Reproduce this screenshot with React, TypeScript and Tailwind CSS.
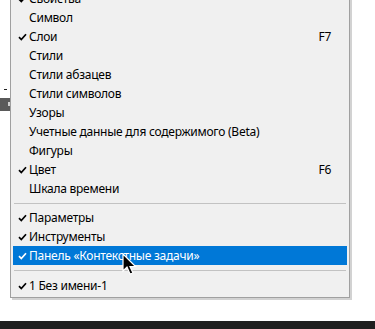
import React from 'react';

type Item =
  | { kind: 'item'; label: string; checked?: boolean; shortcut?: string; active?: boolean }
  | { kind: 'sep'; h: string };

const items: Item[] = [
  { kind: 'item', label: 'Свойства', checked: true },
  { kind: 'item', label: 'Символ' },
  { kind: 'item', label: 'Слои', checked: true, shortcut: 'F7' },
  { kind: 'item', label: 'Стили' },
  { kind: 'item', label: 'Стили абзацев' },
  { kind: 'item', label: 'Стили символов' },
  { kind: 'item', label: 'Узоры' },
  { kind: 'item', label: 'Учетные данные для содержимого (Beta)' },
  { kind: 'item', label: 'Фигуры' },
  { kind: 'item', label: 'Цвет', checked: true, shortcut: 'F6' },
  { kind: 'item', label: 'Шкала времени' },
  { kind: 'sep', h: 'h-[10px]' },
  { kind: 'item', label: 'Параметры', checked: true },
  { kind: 'item', label: 'Инструменты', checked: true },
  { kind: 'item', label: 'Панель «Контекстные задачи»', checked: true, active: true },
  { kind: 'sep', h: 'h-[11px]' },
  { kind: 'item', label: '1 Без имени-1', checked: true },
];

function Check({ white }: { white?: boolean }) {
  return (
    <svg width="9" height="8" viewBox="0 0 9 8" className="shrink-0">
      <path
        d="M1 4.2 L3.3 6.6 L8 1.2"
        fill="none"
        stroke={white ? '#ffffff' : '#000000'}
        strokeWidth="1.7"
      />
    </svg>
  );
}

function Cursor() {
  return (
    <svg
      width="16"
      height="23"
      viewBox="0 0 16 23"
      className="absolute left-[122px] top-[253px]"
    >
      <path
        d="M1 1 L1 18 L5 14 L8 21 L11 20 L8 13.5 L13.5 13.5 Z"
        fill="#000000"
        stroke="#ffffff"
        strokeWidth="1.2"
        strokeLinejoin="miter"
      />
    </svg>
  );
}

export default function App() {
  return (
    <div
      className="relative h-[329px] w-[375px] overflow-hidden bg-white"
      style={{ fontFamily: '"Noto Sans", "Open Sans", sans-serif' }}
    >
      <div className="flex h-[321px]">
        {/* left strip peeking out behind the menu */}
        <div className="flex w-[10px] shrink-0 flex-col">
          <div className="h-[89px]" />
          <div className="ml-[4px] h-px w-[3px] bg-[#222]" />
          <div className="h-[8px]" />
          <div className="relative h-[13px] bg-[#5a5a5a]">
            <div className="absolute right-0 top-[4px] h-[4px] w-[2px] bg-[#d0d0d0]" />
          </div>
        </div>

        {/* menu */}
        <div className="relative mt-[-14px] h-[312px] w-[340px] shrink-0">
          <div className="absolute left-[2px] top-[2px] h-full w-full bg-[#b4b4b4] opacity-60" />
          <div className="relative flex h-full flex-col border border-[#a0a0a0] bg-[#f0f0f0] p-[2px] pb-0">
            {items.map((it, i) =>
              it.kind === 'sep' ? (
                <div key={i} className={'flex shrink-0 items-center px-[1px] ' + it.h}>
                  <div className="h-px w-full bg-[#c2c2c2]" />
                </div>
              ) : (
                <div
                  key={i}
                  className={
                    'flex h-[19px] shrink-0 items-center text-[12px] leading-none tracking-[-0.25px] ' +
                    (it.active ? 'bg-[#0078d7] text-white' : 'text-black')
                  }
                >
                  <div className="flex w-[16px] shrink-0 justify-center pl-[2px]">
                    {it.checked && <Check white={it.active} />}
                  </div>
                  <span className="flex-1 whitespace-nowrap">{it.label}</span>
                  {it.shortcut && <span className="mr-[16px]">{it.shortcut}</span>}
                </div>
              ),
            )}
          </div>
        </div>
      </div>

      <div className="h-[8px] bg-[#1f1f1f]" />
      <Cursor />
    </div>
  );
}
